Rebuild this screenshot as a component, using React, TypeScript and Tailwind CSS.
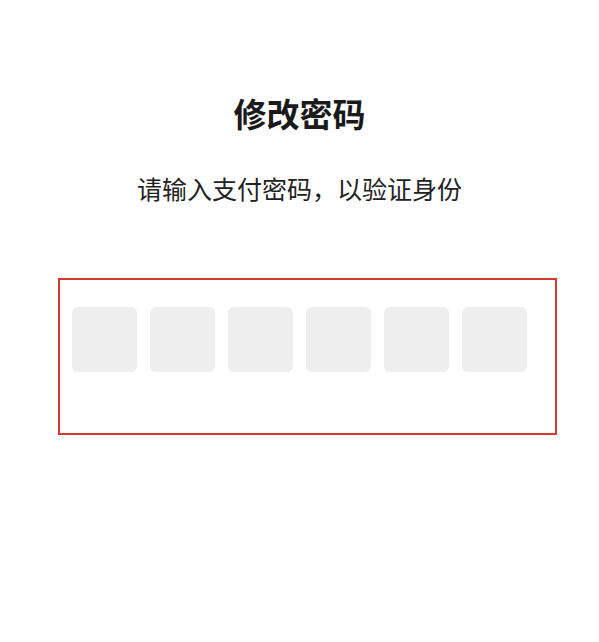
export default function App() {
  const cells = [0, 1, 2, 3, 4, 5];
  return (
    <div
      className="min-h-[642px] w-[599px] bg-white"
      style={{ fontFamily: '"Noto Sans CJK SC", "Noto Sans", sans-serif' }}
    >
      <div className="flex flex-col items-center pt-[97px]">
        <h1 className="text-[33px] font-bold leading-[33px] text-[#1a1a1a]">修改密码</h1>
        <p className="mt-[46px] text-[25px] leading-[25px] text-[#222222]">请输入支付密码，以验证身份</p>
      </div>

      {/* 密码输入框 */}
      <div className="ml-[58px] mt-[77px] h-[157px] w-[499px] border-2 border-[#d53a2f] pl-3 pt-[27px]">
        <div className="flex gap-[13px]">
          {cells.map((i) => (
            <div key={i} className="h-[65px] w-[65px] rounded-md bg-[#eeeeee]" />
          ))}
        </div>
      </div>
    </div>
  );
}
